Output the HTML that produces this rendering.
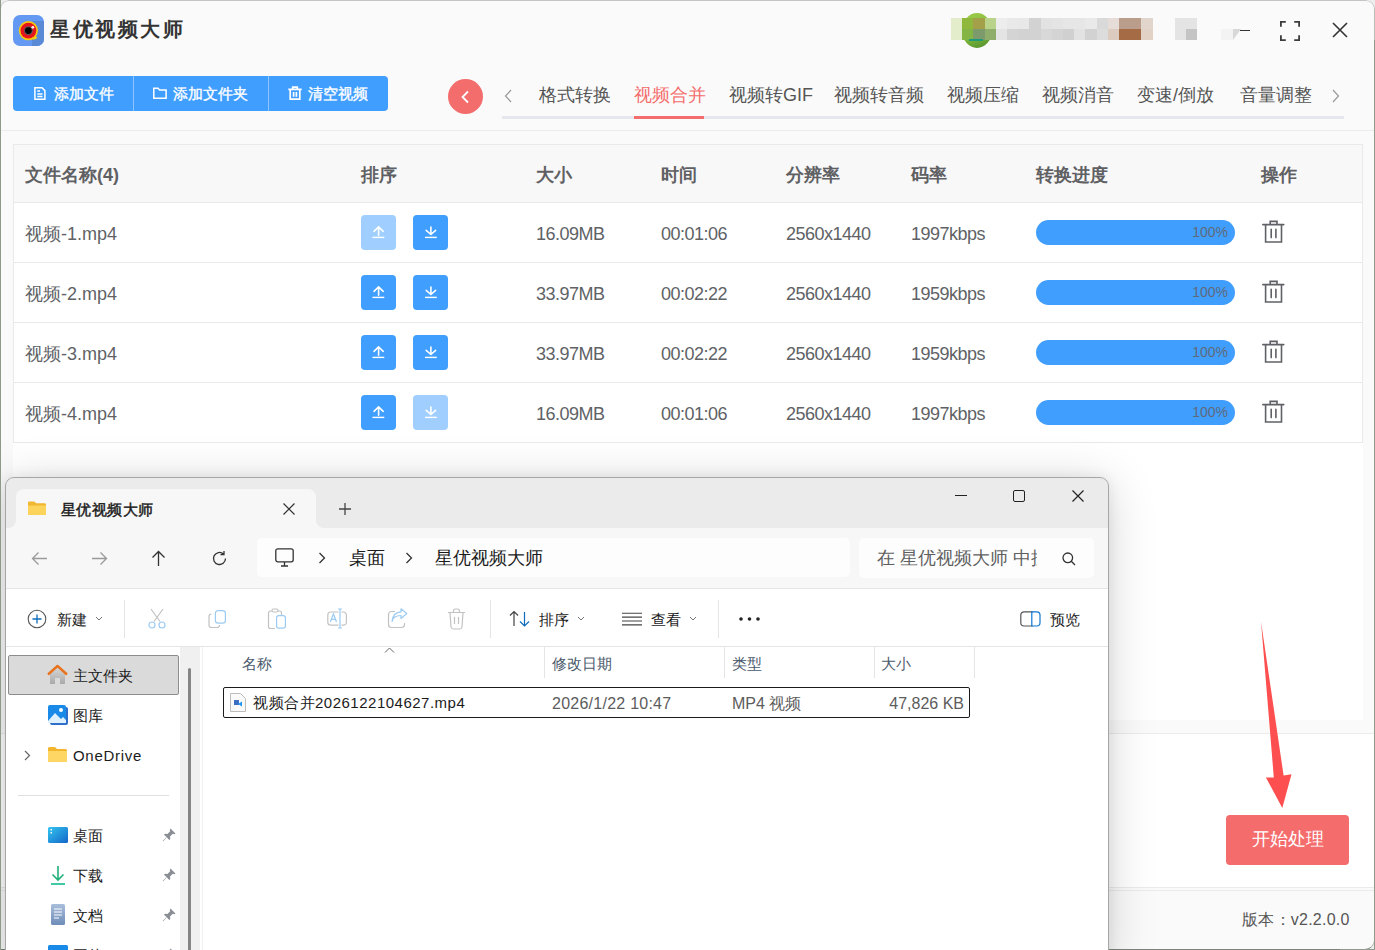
<!DOCTYPE html>
<html><head><meta charset="utf-8">
<style>
*{margin:0;padding:0;box-sizing:border-box}
html,body{width:1375px;height:950px;overflow:hidden;background:#ededed;font-family:"Liberation Sans",sans-serif}
.a{position:absolute}
.app{position:absolute;left:0;top:0;width:1375px;height:950px;background:#fafafa;border-radius:9px 9px 10px 0;overflow:hidden}
.frame{position:absolute;left:0;top:0;width:1375px;height:950px;border:1px solid #c4c4c4;border-bottom-color:#7d857b;border-right-color:#b9bdb8;border-radius:9px 9px 10px 0;pointer-events:none}
.edge{position:absolute;left:0;top:0;width:1px;height:950px;background:#8d9a8a}
.t{position:absolute;white-space:nowrap;line-height:1}
.title{left:50px;top:19px;font-size:20px;font-weight:bold;color:#333;letter-spacing:2.5px}
.btns{left:13px;top:76px;width:375px;height:35px;background:#409eff;border-radius:4px}
.btns .dv{position:absolute;top:0;width:1px;height:35px;background:#8fc2ff}
.btxt{color:#fff;font-size:15px;-webkit-text-stroke:0.35px #fff}
.tab{font-size:18px;color:#555;top:86px}
.th{font-size:18px;font-weight:bold;color:#5f6063;top:166px}
.td{font-size:18px;color:#606266;letter-spacing:-0.5px}
.sb{position:absolute;width:35px;height:35px;border-radius:4px;background:#409eff}
.sb.dis{background:#a0cfff}
.prog{position:absolute;left:1036px;width:199px;height:25px;border-radius:13px;background:#409eff}
.prog span{position:absolute;right:7px;top:5px;font-size:14px;color:#5d6a7a;line-height:1}
</style></head><body>
<div class="app">
  <!-- logo -->
  <svg class="a" style="left:13px;top:15px" width="31" height="31" viewBox="0 0 31 31">
    <rect x="0" y="0" width="31" height="31" rx="7" fill="#6399f2"/>
    <path d="M19 6H31V24A7 7 0 0 1 24 31H19z" fill="#5a8ad6"/>
    <path d="M21 19L24.5 23L20 25z" fill="#f5d20a"/>
    <circle cx="15.4" cy="15.6" r="9.6" fill="#f7c80e"/>
    <circle cx="15.4" cy="15.6" r="7.9" fill="#e8141c"/>
    <circle cx="15.4" cy="15.6" r="4.4" fill="#5a5a5a"/>
    <circle cx="15.4" cy="15.6" r="3.4" fill="#050505"/>
    <circle cx="19.8" cy="12.3" r="1.4" fill="#f4f4f4"/>
  </svg>
  <div class="t title">星优视频大师</div>

  <!-- blurred user blocks -->
  <div class="a" style="left:962px;top:13px;width:30px;height:35px;border-radius:50%;background:linear-gradient(160deg,#9fcd4a 0%,#7fb83a 60%,#4e8a2c 100%)"></div>
<div class="a" style="left:951.0px;top:18px;width:11.3px;height:11px;background:#e3eccb"></div>
<div class="a" style="left:951.0px;top:29px;width:11.3px;height:11px;background:#e3eccb"></div>
<div class="a" style="left:962.2px;top:18px;width:11.3px;height:11px;background:#8fb83c"></div>
<div class="a" style="left:962.2px;top:29px;width:11.3px;height:11px;background:#84b444"></div>
<div class="a" style="left:973.4px;top:18px;width:11.3px;height:11px;background:#a4a04a"></div>
<div class="a" style="left:973.4px;top:29px;width:11.3px;height:11px;background:#7c9a6c"></div>
<div class="a" style="left:984.6px;top:18px;width:11.3px;height:11px;background:#b9d38b"></div>
<div class="a" style="left:984.6px;top:29px;width:11.3px;height:11px;background:#8fae6c"></div>
<div class="a" style="left:995.8px;top:18px;width:11.3px;height:11px;background:#ededed"></div>
<div class="a" style="left:995.8px;top:29px;width:11.3px;height:11px;background:#e4e4e4"></div>
<div class="a" style="left:1007.0px;top:18px;width:11.3px;height:11px;background:#e9e9e9"></div>
<div class="a" style="left:1007.0px;top:29px;width:11.3px;height:11px;background:#d4d4d4"></div>
<div class="a" style="left:1018.2px;top:18px;width:11.3px;height:11px;background:#e8e8e8"></div>
<div class="a" style="left:1018.2px;top:29px;width:11.3px;height:11px;background:#d2d2d2"></div>
<div class="a" style="left:1029.4px;top:18px;width:11.3px;height:11px;background:#d2d2d2"></div>
<div class="a" style="left:1029.4px;top:29px;width:11.3px;height:11px;background:#d2d2d2"></div>
<div class="a" style="left:1040.6px;top:18px;width:11.3px;height:11px;background:#e2e2e2"></div>
<div class="a" style="left:1040.6px;top:29px;width:11.3px;height:11px;background:#d8d8d8"></div>
<div class="a" style="left:1051.8px;top:18px;width:11.3px;height:11px;background:#e4e4e4"></div>
<div class="a" style="left:1051.8px;top:29px;width:11.3px;height:11px;background:#d4d4d4"></div>
<div class="a" style="left:1063.0px;top:18px;width:11.3px;height:11px;background:#e6e6e6"></div>
<div class="a" style="left:1063.0px;top:29px;width:11.3px;height:11px;background:#d0d0d0"></div>
<div class="a" style="left:1074.2px;top:18px;width:11.3px;height:11px;background:#e6e6e6"></div>
<div class="a" style="left:1074.2px;top:29px;width:11.3px;height:11px;background:#e2e2e2"></div>
<div class="a" style="left:1085.4px;top:18px;width:11.3px;height:11px;background:#e9e9e9"></div>
<div class="a" style="left:1085.4px;top:29px;width:11.3px;height:11px;background:#d2d2d2"></div>
<div class="a" style="left:1096.6px;top:18px;width:11.3px;height:11px;background:#d9d9d9"></div>
<div class="a" style="left:1096.6px;top:29px;width:11.3px;height:11px;background:#dcdcdc"></div>
<div class="a" style="left:1107.8px;top:18px;width:11.3px;height:11px;background:#e6ddd8"></div>
<div class="a" style="left:1107.8px;top:29px;width:11.3px;height:11px;background:#dcccc0"></div>
<div class="a" style="left:1119.0px;top:18px;width:11.3px;height:11px;background:#bb9d8c"></div>
<div class="a" style="left:1119.0px;top:29px;width:11.3px;height:11px;background:#a46b44"></div>
<div class="a" style="left:1130.2px;top:18px;width:11.3px;height:11px;background:#bb9d8c"></div>
<div class="a" style="left:1130.2px;top:29px;width:11.3px;height:11px;background:#a46b44"></div>
<div class="a" style="left:1141.4px;top:18px;width:11.3px;height:11px;background:#e2d5cc"></div>
<div class="a" style="left:1141.4px;top:29px;width:11.3px;height:11px;background:#e2d2c6"></div>
<div class="a" style="left:1175.0px;top:18px;width:11.3px;height:11px;background:#e4e4e4"></div>
<div class="a" style="left:1175.0px;top:29px;width:11.3px;height:11px;background:#e4e4e4"></div>
<div class="a" style="left:1186.2px;top:18px;width:11.3px;height:11px;background:#e4e4e4"></div>
<div class="a" style="left:1186.2px;top:29px;width:11.3px;height:11px;background:#c4c4c4"></div>
<div class="a" style="left:1220.5px;top:29px;width:12.5px;height:11px;background:#f3f3f3"></div>
<svg class="a" style="left:1233px;top:29px" width="8" height="11" viewBox="0 0 8 11"><path d="M0 0H8L0 11z" fill="#d8d8d8"/></svg>
<div class="a" style="left:969px;top:39px;width:14px;height:2px;background:#1d9a7a"></div>

  <!-- window controls -->
  <div class="a" style="left:1240px;top:29.5px;width:10px;height:1.6px;background:#333"></div>
  <svg class="a" style="left:1279px;top:20px" width="22" height="22" viewBox="0 0 22 22" fill="none" stroke="#3c3c3c" stroke-width="1.8">
    <path d="M1.9 6.8V1.9h4.9M15.2 1.9h4.9v4.9M20.1 15.2v4.9h-4.9M6.8 20.1H1.9v-4.9"/>
  </svg>
  <svg class="a" style="left:1332px;top:22px" width="16" height="16" viewBox="0 0 16 16" fill="none" stroke="#333" stroke-width="1.6">
    <path d="M1 1L15 15M15 1L1 15"/>
  </svg>

  <!-- button group -->
  <div class="a btns">
    <div class="dv" style="left:120px"></div>
    <div class="dv" style="left:255px"></div>
  </div>
  <svg class="a" style="left:33px;top:86px" width="14" height="15" viewBox="0 0 14 15" fill="none" stroke="#fff" stroke-width="1.5"><path d="M1.9 1.7H9L11.9 4.6V13.2H1.9Z"/><path d="M4.3 5H7M4.3 8H9.5M4.3 10.6H9.5"/></svg>
  <svg class="a" style="left:152px;top:87px" width="16" height="13" viewBox="0 0 16 13" fill="none" stroke="#fff" stroke-width="1.5"><path d="M1.8 1.2H6L7.6 2.9H14.1V11.2H1.8Z"/></svg>
  <svg class="a" style="left:288px;top:86px" width="14" height="15" viewBox="0 0 14 15" fill="none" stroke="#fff" stroke-width="1.7"><path d="M0.3 3.3H13.7M4.7 3V1.2H9.3V3M2.2 3.5V13.2H11.8V3.5M5.6 6V10.8M8.4 6V10.8"/></svg>
  <div class="t btxt" style="left:54px;top:85.5px">添加文件</div>
  <div class="t btxt" style="left:173px;top:85.5px">添加文件夹</div>
  <div class="t btxt" style="left:308px;top:85.5px">清空视频</div>

  <!-- red circle -->
  <div class="a" style="left:448px;top:79px;width:35px;height:35px;border-radius:50%;background:#f46d6d"></div>
  <svg class="a" style="left:460px;top:90px" width="10" height="14" viewBox="0 0 10 14" fill="none" stroke="#fff" stroke-width="1.8"><path d="M8 1.5L2.5 7L8 12.5"/></svg>

  <!-- tabs -->
  <svg class="a" style="left:503px;top:89px" width="10" height="14" viewBox="0 0 10 14" fill="none" stroke="#999" stroke-width="1.2"><path d="M8 1L2.5 7L8 13"/></svg>
  <div class="t tab" style="left:539px">格式转换</div>
  <div class="t tab" style="left:634px;color:#f56c6c">视频合并</div>
  <div class="t tab" style="left:729px">视频转GIF</div>
  <div class="t tab" style="left:834px">视频转音频</div>
  <div class="t tab" style="left:947px">视频压缩</div>
  <div class="t tab" style="left:1042px">视频消音</div>
  <div class="t tab" style="left:1137px">变速/倒放</div>
  <div class="t tab" style="left:1240px">音量调整</div>
  <svg class="a" style="left:1331px;top:89px" width="10" height="14" viewBox="0 0 10 14" fill="none" stroke="#999" stroke-width="1.2"><path d="M2 1L7.5 7L2 13"/></svg>
  <div class="a" style="left:502px;top:116px;width:842px;height:3px;background:#e4e7ed"></div>
  <div class="a" style="left:634px;top:116px;width:70px;height:3px;background:#f56c6c"></div>

  <div class="a" style="left:0;top:130px;width:1375px;height:1px;background:#ececec"></div>

  <!-- white panel & table -->
  <div class="a" style="left:13px;top:144px;width:1350px;height:576px;background:#fff"></div>
  <div class="a" style="left:13px;top:144px;width:1350px;height:299px;border:1px solid #e9e9e9;background:#fff"></div>
  <div class="a" style="left:14px;top:145px;width:1348px;height:57px;background:#f8f8f8"></div>
  <div class="a" style="left:14px;top:202px;width:1348px;height:1px;background:#e9e9e9"></div>
  <div class="a" style="left:14px;top:262px;width:1348px;height:1px;background:#e9e9e9"></div>
  <div class="a" style="left:14px;top:322px;width:1348px;height:1px;background:#e9e9e9"></div>
  <div class="a" style="left:14px;top:382px;width:1348px;height:1px;background:#e9e9e9"></div>

  <div class="t th" style="left:25px">文件名称(4)</div>
  <div class="t th" style="left:361px">排序</div>
  <div class="t th" style="left:536px">大小</div>
  <div class="t th" style="left:661px">时间</div>
  <div class="t th" style="left:786px">分辨率</div>
  <div class="t th" style="left:911px">码率</div>
  <div class="t th" style="left:1036px">转换进度</div>
  <div class="t th" style="left:1261px">操作</div>

  <div class="t td" style="left:25px;top:225px;letter-spacing:0">视频-1.mp4</div>
<div class="sb dis" style="left:361px;top:215px"><svg class="a" style="left:10px;top:10px" width="15" height="15" viewBox="0 0 15 15" fill="none" stroke="#fff" stroke-width="1.6"><path d="M7.6 10.2V2.4M3 6.3L7.6 1.9L12.2 6.3" stroke-linecap="round" stroke-linejoin="round"/><path d="M1.5 12.4H13.3" stroke-width="1.4"/></svg></div>
<div class="sb" style="left:413px;top:215px"><svg class="a" style="left:10px;top:10px" width="15" height="15" viewBox="0 0 15 15" fill="none" stroke="#fff" stroke-width="1.6"><path d="M7.9 2.1V9.2M3.2 5.4L7.9 9.5L12.6 5.4" stroke-linecap="round" stroke-linejoin="round"/><path d="M2 12.4H13.8" stroke-width="1.4"/></svg></div>
<div class="t td" style="left:536px;top:225px">16.09MB</div>
<div class="t td" style="left:661px;top:225px">00:01:06</div>
<div class="t td" style="left:786px;top:225px">2560x1440</div>
<div class="t td" style="left:911px;top:225px">1997kbps</div>
<div class="prog" style="top:220px"><span>100%</span></div>
<svg class="a" style="left:1262px;top:220px" width="24" height="24" viewBox="0 0 24 24" fill="none" stroke="#5f6166" stroke-width="1.6"><path d="M0.8 4.6H21.8M8.2 4.4V1.4H15V4.4M3.6 4.6V22H19.5V4.6M9.2 9.2V17.6M13.9 9.2V17.6" stroke-linecap="round"/></svg>
<div class="t td" style="left:25px;top:285px;letter-spacing:0">视频-2.mp4</div>
<div class="sb" style="left:361px;top:275px"><svg class="a" style="left:10px;top:10px" width="15" height="15" viewBox="0 0 15 15" fill="none" stroke="#fff" stroke-width="1.6"><path d="M7.6 10.2V2.4M3 6.3L7.6 1.9L12.2 6.3" stroke-linecap="round" stroke-linejoin="round"/><path d="M1.5 12.4H13.3" stroke-width="1.4"/></svg></div>
<div class="sb" style="left:413px;top:275px"><svg class="a" style="left:10px;top:10px" width="15" height="15" viewBox="0 0 15 15" fill="none" stroke="#fff" stroke-width="1.6"><path d="M7.9 2.1V9.2M3.2 5.4L7.9 9.5L12.6 5.4" stroke-linecap="round" stroke-linejoin="round"/><path d="M2 12.4H13.8" stroke-width="1.4"/></svg></div>
<div class="t td" style="left:536px;top:285px">33.97MB</div>
<div class="t td" style="left:661px;top:285px">00:02:22</div>
<div class="t td" style="left:786px;top:285px">2560x1440</div>
<div class="t td" style="left:911px;top:285px">1959kbps</div>
<div class="prog" style="top:280px"><span>100%</span></div>
<svg class="a" style="left:1262px;top:280px" width="24" height="24" viewBox="0 0 24 24" fill="none" stroke="#5f6166" stroke-width="1.6"><path d="M0.8 4.6H21.8M8.2 4.4V1.4H15V4.4M3.6 4.6V22H19.5V4.6M9.2 9.2V17.6M13.9 9.2V17.6" stroke-linecap="round"/></svg>
<div class="t td" style="left:25px;top:345px;letter-spacing:0">视频-3.mp4</div>
<div class="sb" style="left:361px;top:335px"><svg class="a" style="left:10px;top:10px" width="15" height="15" viewBox="0 0 15 15" fill="none" stroke="#fff" stroke-width="1.6"><path d="M7.6 10.2V2.4M3 6.3L7.6 1.9L12.2 6.3" stroke-linecap="round" stroke-linejoin="round"/><path d="M1.5 12.4H13.3" stroke-width="1.4"/></svg></div>
<div class="sb" style="left:413px;top:335px"><svg class="a" style="left:10px;top:10px" width="15" height="15" viewBox="0 0 15 15" fill="none" stroke="#fff" stroke-width="1.6"><path d="M7.9 2.1V9.2M3.2 5.4L7.9 9.5L12.6 5.4" stroke-linecap="round" stroke-linejoin="round"/><path d="M2 12.4H13.8" stroke-width="1.4"/></svg></div>
<div class="t td" style="left:536px;top:345px">33.97MB</div>
<div class="t td" style="left:661px;top:345px">00:02:22</div>
<div class="t td" style="left:786px;top:345px">2560x1440</div>
<div class="t td" style="left:911px;top:345px">1959kbps</div>
<div class="prog" style="top:340px"><span>100%</span></div>
<svg class="a" style="left:1262px;top:340px" width="24" height="24" viewBox="0 0 24 24" fill="none" stroke="#5f6166" stroke-width="1.6"><path d="M0.8 4.6H21.8M8.2 4.4V1.4H15V4.4M3.6 4.6V22H19.5V4.6M9.2 9.2V17.6M13.9 9.2V17.6" stroke-linecap="round"/></svg>
<div class="t td" style="left:25px;top:405px;letter-spacing:0">视频-4.mp4</div>
<div class="sb" style="left:361px;top:395px"><svg class="a" style="left:10px;top:10px" width="15" height="15" viewBox="0 0 15 15" fill="none" stroke="#fff" stroke-width="1.6"><path d="M7.6 10.2V2.4M3 6.3L7.6 1.9L12.2 6.3" stroke-linecap="round" stroke-linejoin="round"/><path d="M1.5 12.4H13.3" stroke-width="1.4"/></svg></div>
<div class="sb dis" style="left:413px;top:395px"><svg class="a" style="left:10px;top:10px" width="15" height="15" viewBox="0 0 15 15" fill="none" stroke="#fff" stroke-width="1.6"><path d="M7.9 2.1V9.2M3.2 5.4L7.9 9.5L12.6 5.4" stroke-linecap="round" stroke-linejoin="round"/><path d="M2 12.4H13.8" stroke-width="1.4"/></svg></div>
<div class="t td" style="left:536px;top:405px">16.09MB</div>
<div class="t td" style="left:661px;top:405px">00:01:06</div>
<div class="t td" style="left:786px;top:405px">2560x1440</div>
<div class="t td" style="left:911px;top:405px">1997kbps</div>
<div class="prog" style="top:400px"><span>100%</span></div>
<svg class="a" style="left:1262px;top:400px" width="24" height="24" viewBox="0 0 24 24" fill="none" stroke="#5f6166" stroke-width="1.6"><path d="M0.8 4.6H21.8M8.2 4.4V1.4H15V4.4M3.6 4.6V22H19.5V4.6M9.2 9.2V17.6M13.9 9.2V17.6" stroke-linecap="round"/></svg>

  <!-- bottom area -->
  <div class="a" style="left:0;top:733px;width:1375px;height:1px;background:#ebebeb"></div>
  <div class="a" style="left:0;top:734px;width:1375px;height:153px;background:#fff"></div>
  <div class="a" style="left:0;top:887px;width:1375px;height:1px;background:#ebebeb"></div>
  <div class="a" style="left:0;top:890px;width:1375px;height:1px;background:#ebebeb"></div>
  <div class="a" style="left:1226px;top:815px;width:123px;height:50px;border-radius:4px;background:#f56c6c"></div>
  <div class="t" style="left:1252px;top:830px;font-size:18px;color:#fff">开始处理</div>
  <div class="t" style="left:1242px;top:912px;font-size:16px;color:#555;letter-spacing:0.25px">版本：v2.2.0.0</div>

  <!-- arrow -->
  <svg class="a" style="left:0;top:0" width="1375" height="950">
    <polygon points="1261,621.5 1283.6,775.6 1291.5,774.3 1282.3,808 1265.9,777.4 1273.8,777.4" fill="#fd4f4f"/>
  </svg>

  
<div class="frame"></div>
<div class="a" style="left:5px;top:477px;width:1104px;height:490px;border-radius:9px 9px 0 0;box-shadow:0 6px 48px rgba(0,0,0,0.17),0 0 14px rgba(0,0,0,0.08);background:#fff"></div>
<div class="a" style="left:6px;top:478px;width:1102px;height:50px;background:#ebebeb;border-radius:8px 8px 0 0"></div>
<div class="a" style="left:16px;top:489px;width:300px;height:40px;background:#f7f7f7;border-radius:8px 8px 0 0"></div>
<div class="a" style="left:316px;top:520px;width:8px;height:8px;background:#f7f7f7"></div>
<div class="a" style="left:316px;top:519px;width:9px;height:9px;background:#ebebeb;border-bottom-left-radius:8px"></div>
<div class="a" style="left:8px;top:520px;width:8px;height:8px;background:#f7f7f7"></div>
<div class="a" style="left:7px;top:519px;width:9px;height:9px;background:#ebebeb;border-bottom-right-radius:8px"></div>
<div class="a" style="left:6px;top:528px;width:1102px;height:60px;background:#f7f7f7"></div>
<div class="a" style="left:6px;top:588px;width:1102px;height:1px;background:#e5e5e5"></div>
<div class="a" style="left:6px;top:646px;width:1102px;height:1px;background:#e5e5e5"></div>
<div class="a" style="left:5px;top:477px;width:1104px;height:500px;border:1px solid #a6a6a6;border-radius:9px 9px 0 0"></div>
<!-- tab -->
<svg class="a" style="left:28px;top:501px" width="18" height="14" viewBox="0 0 20 16" preserveAspectRatio="none"><path d="M0 2a1.5 1.5 0 0 1 1.5-1.5h5.5l2 2h9.5A1.5 1.5 0 0 1 20 4v10.5a1.5 1.5 0 0 1-1.5 1.5h-17A1.5 1.5 0 0 1 0 14.5z" fill="#f0b72f"/><path d="M0 5h20v9.5a1.5 1.5 0 0 1-1.5 1.5h-17A1.5 1.5 0 0 1 0 14.5z" fill="#fcd45c"/></svg>
<div class="t" style="left:60.5px;top:501.5px;font-size:15px;color:#1b1b1b;letter-spacing:0.5px;-webkit-text-stroke:0.45px #1b1b1b">星优视频大师</div>
<svg class="a" style="left:283px;top:503px" width="12" height="12" viewBox="0 0 12 12" fill="none" stroke="#333" stroke-width="1.2"><path d="M0.5 0.5L11.5 11.5M11.5 0.5L0.5 11.5"/></svg>
<svg class="a" style="left:338px;top:502px" width="14" height="14" viewBox="0 0 14 14" fill="none" stroke="#444" stroke-width="1.3"><path d="M7 1V13M1 7H13"/></svg>
<!-- window buttons -->
<div class="a" style="left:955px;top:495px;width:12px;height:1px;background:#222"></div>
<div class="a" style="left:1013px;top:490px;width:12px;height:12px;border:1.3px solid #222;border-radius:2px"></div>
<svg class="a" style="left:1072px;top:490px" width="12" height="12" viewBox="0 0 12 12" fill="none" stroke="#222" stroke-width="1.2"><path d="M0.5 0.5L11.5 11.5M11.5 0.5L0.5 11.5"/></svg>
<!-- nav -->
<svg class="a" style="left:31px;top:551px" width="17" height="15" viewBox="0 0 17 15" fill="none" stroke="#9a9a9a" stroke-width="1.3"><path d="M16 7.5H1.5M7.5 1.5L1.5 7.5L7.5 13.5"/></svg>
<svg class="a" style="left:91px;top:551px" width="17" height="15" viewBox="0 0 17 15" fill="none" stroke="#9a9a9a" stroke-width="1.3"><path d="M1 7.5H15.5M9.5 1.5L15.5 7.5L9.5 13.5"/></svg>
<svg class="a" style="left:151px;top:550px" width="15" height="17" viewBox="0 0 15 17" fill="none" stroke="#333" stroke-width="1.3"><path d="M7.5 16V1.5M1.5 7.5L7.5 1.5L13.5 7.5"/></svg>
<svg class="a" style="left:211px;top:550px" width="17" height="17" viewBox="0 0 17 17" fill="none" stroke="#333" stroke-width="1.3"><path d="M14.5 8.5A6 6 0 1 1 12.5 4M13 1V4.5H9.5"/></svg>
<div class="a" style="left:257px;top:538px;width:593px;height:39px;background:#fdfdfd;border-radius:5px"></div>
<svg class="a" style="left:275px;top:548px" width="19" height="19" viewBox="0 0 19 19" fill="none" stroke="#333" stroke-width="1.3"><rect x="0.8" y="0.8" width="17.4" height="13" rx="2"/><path d="M6 18H13M9.5 14V18"/></svg>
<svg class="a" style="left:318px;top:552px" width="8" height="12" viewBox="0 0 8 12" fill="none" stroke="#333" stroke-width="1.3"><path d="M1.5 1L6.5 6L1.5 11"/></svg>
<div class="t" style="left:349px;top:549px;font-size:18px;color:#1b1b1b">桌面</div>
<svg class="a" style="left:405px;top:552px" width="8" height="12" viewBox="0 0 8 12" fill="none" stroke="#333" stroke-width="1.3"><path d="M1.5 1L6.5 6L1.5 11"/></svg>
<div class="t" style="left:435px;top:549px;font-size:18px;color:#1b1b1b">星优视频大师</div>
<div class="a" style="left:859px;top:538px;width:235px;height:40px;background:#fdfdfd;border-radius:5px;overflow:hidden">
  <div class="t" style="left:18px;top:11px;font-size:18px;color:#5f5f5f;width:160px;overflow:hidden">在 星优视频大师 中搜索</div>
</div>
<svg class="a" style="left:1062px;top:552px" width="14" height="14" viewBox="0 0 14 14" fill="none" stroke="#333" stroke-width="1.3"><circle cx="5.8" cy="5.8" r="4.8"/><path d="M9.3 9.3L13 13"/></svg>
<!-- toolbar -->
<svg class="a" style="left:27px;top:609px" width="20" height="20" viewBox="0 0 20 20" fill="none" stroke-width="1.3"><circle cx="10" cy="10" r="8.8" stroke="#555" stroke-width="1.1"/><path d="M10 5.5V14.5M5.5 10H14.5" stroke="#0f6cbd"/></svg>
<div class="t" style="left:57px;top:612px;font-size:15px;color:#1b1b1b">新建</div>
<svg class="a" style="left:95px;top:616px" width="8" height="5" viewBox="0 0 8 5" fill="none" stroke="#777" stroke-width="1"><path d="M1 1L4 4L7 1"/></svg>
<div class="a" style="left:124px;top:600px;width:1px;height:38px;background:#e5e5e5"></div>
<svg class="a" style="left:146px;top:608px" width="21" height="22" viewBox="0 0 21 22" fill="none" stroke-width="1.2"><path d="M5 1L14 13.5M17 1L8 13.5" stroke="#c2c2c2"/><circle cx="6" cy="17" r="3" stroke="#9ccbf3"/><circle cx="16" cy="17" r="3" stroke="#9ccbf3"/></svg>
<svg class="a" style="left:207px;top:609px" width="20" height="20" viewBox="0 0 20 20" fill="none" stroke-width="1.2"><rect x="8.4" y="1.6" width="10" height="12.6" rx="2.6" stroke="#9ccbf3"/><path d="M4.5 5A2.5 2.5 0 0 0 2 7.5V16A2.5 2.5 0 0 0 4.5 18.5H10A2.5 2.5 0 0 0 12.5 16" stroke="#c2c2c2"/></svg>
<svg class="a" style="left:266px;top:608px" width="21" height="22" viewBox="0 0 21 22" fill="none" stroke-width="1.2"><path d="M6 3H4.5A2 2 0 0 0 2.5 5V18.5A2 2 0 0 0 4.5 20.5H9M12 3H13.5A2 2 0 0 1 15.5 5V7" stroke="#c2c2c2"/><rect x="6" y="1" width="6" height="3" rx="1.5" stroke="#c2c2c2"/><rect x="10.6" y="7.6" width="8.8" height="12.6" rx="2.2" stroke="#9ccbf3"/></svg>
<svg class="a" style="left:326px;top:608px" width="22" height="22" viewBox="0 0 22 22" fill="none" stroke-width="1.2"><path d="M12.5 4H4.8A3 3 0 0 0 1.8 7V14.2A3 3 0 0 0 4.8 17.2H12.5M15.5 4H17.4A3 3 0 0 1 20.4 7V14.2A3 3 0 0 1 17.4 17.2H15.5" stroke="#c2c2c2"/><path d="M14 1V20M12 1H16M12 20H16M4.3 14L7.4 6L10.5 14M5.4 11.3H9.4" stroke="#9ccbf3"/></svg>
<svg class="a" style="left:387px;top:608px" width="21" height="21" viewBox="0 0 21 21" fill="none" stroke-width="1.2"><path d="M8 3.5H4.5A3 3 0 0 0 1.5 6.5V16.5A3 3 0 0 0 4.5 19.5H14.5A3 3 0 0 0 17.5 16.5V15" stroke="#c2c2c2"/><path d="M5 13.5C6 9 9.5 7.5 14 7.5V10.5L19.7 5.5L14 0.8V3.8C8.5 4 5.5 8 5 13.5z" stroke="#9ccbf3" stroke-linejoin="round"/></svg>
<svg class="a" style="left:447px;top:608px" width="19" height="22" viewBox="0 0 19 22" fill="none" stroke="#c2c2c2" stroke-width="1.2"><path d="M1 4.5H18M6.5 4.5V3A2 2 0 0 1 8.5 1h2A2 2 0 0 1 12.5 3v1.5M3 4.5l1 14.5A2.5 2.5 0 0 0 6.5 21h6A2.5 2.5 0 0 0 15 19L16 4.5M7.5 9V16M11.5 9V16"/></svg>
<div class="a" style="left:490px;top:600px;width:1px;height:38px;background:#e5e5e5"></div>
<svg class="a" style="left:509px;top:610px" width="22" height="17" viewBox="0 0 22 17" fill="none" stroke-width="1.2"><path d="M5 16V1.5M1 5.5L5 1.5L9 5.5" stroke="#444"/><path d="M15.5 2V16M11 11.5L15.5 16L20 11.5" stroke="#0f6cbd"/></svg>
<div class="t" style="left:539px;top:612px;font-size:15px;color:#1b1b1b">排序</div>
<svg class="a" style="left:577px;top:616px" width="8" height="5" viewBox="0 0 8 5" fill="none" stroke="#777" stroke-width="1"><path d="M1 1L4 4L7 1"/></svg>
<svg class="a" style="left:622px;top:612px" width="20" height="14" viewBox="0 0 20 14" fill="none" stroke="#444" stroke-width="1.1"><path d="M0 1.2H20M0 5.1H20M0 9H20M0 12.9H20"/></svg>
<div class="t" style="left:651px;top:612px;font-size:15px;color:#1b1b1b">查看</div>
<svg class="a" style="left:689px;top:616px" width="8" height="5" viewBox="0 0 8 5" fill="none" stroke="#777" stroke-width="1"><path d="M1 1L4 4L7 1"/></svg>
<div class="a" style="left:718px;top:600px;width:1px;height:38px;background:#e5e5e5"></div>
<svg class="a" style="left:739px;top:617px" width="21" height="4" viewBox="0 0 21 4" fill="#222"><circle cx="2" cy="2" r="1.8"/><circle cx="10.5" cy="2" r="1.8"/><circle cx="19" cy="2" r="1.8"/></svg>
<svg class="a" style="left:1020px;top:611px" width="21" height="16" viewBox="0 0 21 16" fill="none" stroke-width="1.2"><path d="M12.5 0.8H4A3.2 3.2 0 0 0 0.8 4V11.8A3.2 3.2 0 0 0 4 15H12.5" stroke="#555"/><path d="M11.8 0.8H16.8A3.2 3.2 0 0 1 20 4V11.8A3.2 3.2 0 0 1 16.8 15H11.8Z" stroke="#0f78d4"/></svg>
<div class="t" style="left:1050px;top:612px;font-size:15px;color:#1b1b1b">预览</div>
<!-- sidebar -->
<div class="a" style="left:180px;top:647px;width:20px;height:310px;background:#f0f0f0"></div>
<div class="a" style="left:188px;top:668px;width:3px;height:290px;background:#858585;border-radius:2px"></div>
<div class="a" style="left:202px;top:647px;width:1px;height:310px;background:#f0f0f0"></div>
<div class="a" style="left:8px;top:655px;width:171px;height:40px;background:#dadada;border:1px solid #8c8c8c;border-radius:2px"></div>
<svg class="a" style="left:47px;top:664px" width="21" height="21" viewBox="0 0 21 21"><defs><linearGradient id="hg" x1="0" y1="0" x2="0" y2="1"><stop offset="0" stop-color="#d8d8d8"/><stop offset="1" stop-color="#a9a9a9"/></linearGradient></defs><path d="M3 9.5L10.5 3L18 9.5V20H13V14H8V20H3z" fill="url(#hg)"/><path d="M1 10.5L10.5 2L20 10.5" fill="none" stroke="#e8731e" stroke-width="2.4" stroke-linejoin="round"/></svg>
<div class="t" style="left:73px;top:668px;font-size:15px;color:#1b1b1b">主文件夹</div>
<svg class="a" style="left:47px;top:704px" width="22" height="22" viewBox="0 0 22 22"><rect x="3" y="3" width="18" height="18" rx="2" fill="#2f6fc9"/><rect x="1" y="1" width="18" height="18" rx="2" fill="#1a8ae8"/><path d="M1 17L8 9L14 15L16 13L19 16V19H1z" fill="#dff0ff"/><circle cx="14" cy="6" r="2" fill="#fff"/></svg>
<div class="t" style="left:73px;top:708px;font-size:15px;color:#1b1b1b">图库</div>
<svg class="a" style="left:24px;top:750px" width="7" height="11" viewBox="0 0 7 11" fill="none" stroke="#666" stroke-width="1.2"><path d="M1 1L5.5 5.5L1 10"/></svg>
<svg class="a" style="left:48px;top:747px" width="19" height="15" viewBox="0 0 19 15"><path d="M0 1.5A1.5 1.5 0 0 1 1.5 0H7L9 2H17.5A1.5 1.5 0 0 1 19 3.5V13.5A1.5 1.5 0 0 1 17.5 15H1.5A1.5 1.5 0 0 1 0 13.5z" fill="#f2b52c"/><path d="M0 4H19V13.5A1.5 1.5 0 0 1 17.5 15H1.5A1.5 1.5 0 0 1 0 13.5z" fill="#fdd663"/></svg>
<div class="t" style="left:73px;top:748px;font-size:15px;color:#1b1b1b;letter-spacing:0.7px">OneDrive</div>
<div class="a" style="left:18px;top:795px;width:151px;height:1px;background:#e0e0e0"></div>
<svg class="a" style="left:48px;top:827px" width="20" height="16" viewBox="0 0 20 16"><defs><linearGradient id="dg" x1="0" y1="0" x2="1" y2="1"><stop offset="0" stop-color="#33c5f0"/><stop offset="1" stop-color="#1466c8"/></linearGradient></defs><rect x="0" y="0" width="20" height="16" rx="1.5" fill="url(#dg)"/><rect x="2.5" y="2" width="1.5" height="1.5" fill="#fff"/><rect x="2.5" y="5" width="1.5" height="1.5" fill="#fff"/></svg>
<div class="t" style="left:73px;top:828px;font-size:15px;color:#1b1b1b">桌面</div>
<svg class="a" style="left:50px;top:865px" width="16" height="20" viewBox="0 0 16 20" fill="none" stroke="#20b07a" stroke-width="1.6"><path d="M8 1V15M2.5 9.5L8 15L13.5 9.5"/><path d="M1 19H15" stroke="#2cc39a" stroke-width="1.8"/></svg>
<div class="t" style="left:73px;top:868px;font-size:15px;color:#1b1b1b">下载</div>
<svg class="a" style="left:51px;top:904px" width="14" height="21" viewBox="0 0 14 21"><defs><linearGradient id="fg" x1="0" y1="0" x2="0" y2="1"><stop offset="0" stop-color="#a9bedb"/><stop offset="1" stop-color="#6f8db8"/></linearGradient></defs><rect x="0" y="0" width="14" height="21" rx="1.5" fill="url(#fg)"/><path d="M3 5H11M3 8H11M3 11H11M3 14H8" stroke="#fff" stroke-width="1"/></svg>
<div class="t" style="left:73px;top:908px;font-size:15px;color:#1b1b1b">文档</div>
<svg class="a" style="left:48px;top:945px" width="20" height="10" viewBox="0 0 20 10"><rect x="0" y="0" width="20" height="10" rx="1.5" fill="#1a8ae8"/></svg>
<div class="t" style="left:73px;top:948px;font-size:15px;color:#1b1b1b">图片</div>
<svg class="a" style="left:162px;top:828px" width="14" height="14" viewBox="0 0 14 14" fill="#8a8f96"><path d="M8.5 0.5L13.5 5.5L12.3 6.2L10.8 5.8L8 8.6L8.3 11L7.2 12.1L4.8 9.3L1.2 13.2L0.8 12.8L4.6 9.1L1.9 6.8L3 5.7L5.4 6L8.2 3.2L7.8 1.7z"/></svg>
<svg class="a" style="left:162px;top:868px" width="14" height="14" viewBox="0 0 14 14" fill="#8a8f96"><path d="M8.5 0.5L13.5 5.5L12.3 6.2L10.8 5.8L8 8.6L8.3 11L7.2 12.1L4.8 9.3L1.2 13.2L0.8 12.8L4.6 9.1L1.9 6.8L3 5.7L5.4 6L8.2 3.2L7.8 1.7z"/></svg>
<svg class="a" style="left:162px;top:908px" width="14" height="14" viewBox="0 0 14 14" fill="#8a8f96"><path d="M8.5 0.5L13.5 5.5L12.3 6.2L10.8 5.8L8 8.6L8.3 11L7.2 12.1L4.8 9.3L1.2 13.2L0.8 12.8L4.6 9.1L1.9 6.8L3 5.7L5.4 6L8.2 3.2L7.8 1.7z"/></svg>
<svg class="a" style="left:162px;top:948px" width="14" height="14" viewBox="0 0 14 14" fill="#8a8f96"><path d="M8.5 0.5L13.5 5.5L12.3 6.2L10.8 5.8L8 8.6L8.3 11L7.2 12.1L4.8 9.3L1.2 13.2L0.8 12.8L4.6 9.1L1.9 6.8L3 5.7L5.4 6L8.2 3.2L7.8 1.7z"/></svg>
<!-- list -->
<div class="t" style="left:242px;top:656px;font-size:15px;color:#4b5a6c">名称</div>
<svg class="a" style="left:384px;top:647px" width="11" height="6" viewBox="0 0 11 6" fill="none" stroke="#666" stroke-width="1"><path d="M1 5.5L5.5 1L10 5.5"/></svg>
<div class="a" style="left:544px;top:647px;width:1px;height:31px;background:#e5e5e5"></div>
<div class="t" style="left:552px;top:656px;font-size:15px;color:#4b5a6c">修改日期</div>
<div class="a" style="left:724px;top:647px;width:1px;height:31px;background:#e5e5e5"></div>
<div class="t" style="left:732px;top:656px;font-size:15px;color:#4b5a6c">类型</div>
<div class="a" style="left:874px;top:647px;width:1px;height:31px;background:#e5e5e5"></div>
<div class="t" style="left:881px;top:656px;font-size:15px;color:#4b5a6c">大小</div>
<div class="a" style="left:974px;top:647px;width:1px;height:31px;background:#e5e5e5"></div>
<div class="a" style="left:223px;top:687px;width:747px;height:31px;border:1.5px solid #1b1b1b;border-radius:2px"></div>
<svg class="a" style="left:230px;top:693px" width="16" height="19" viewBox="0 0 16 19"><path d="M0.5 0.5H10.5L15.5 5.5V18.5H0.5z" fill="#fafafa" stroke="#bcbcbc"/><rect x="4" y="7" width="5" height="5" fill="#3a6fc1"/><path d="M8 11L12 8.5V13.5z" fill="#2196f3"/></svg>
<div class="t" style="left:253px;top:695px;font-size:15px;color:#1b1b1b;letter-spacing:0.5px">视频合并2026122104627.mp4</div>
<div class="t" style="left:552px;top:696px;font-size:16px;color:#5c5c5c;letter-spacing:0.25px">2026/1/22 10:47</div>
<div class="t" style="left:732px;top:696px;font-size:16px;color:#5c5c5c">MP4 视频</div>
<div class="t" style="left:964px;top:696px;font-size:16px;color:#5c5c5c;transform:translateX(-100%)">47,826 KB</div>


</div>
<div class="edge"></div>
<div class="a" style="left:1374px;top:40px;width:1px;height:910px;background:#8f9a8c"></div>
<div class="a" style="left:1340px;top:949px;width:35px;height:1px;background:#8f9a8c"></div>
</body></html>
